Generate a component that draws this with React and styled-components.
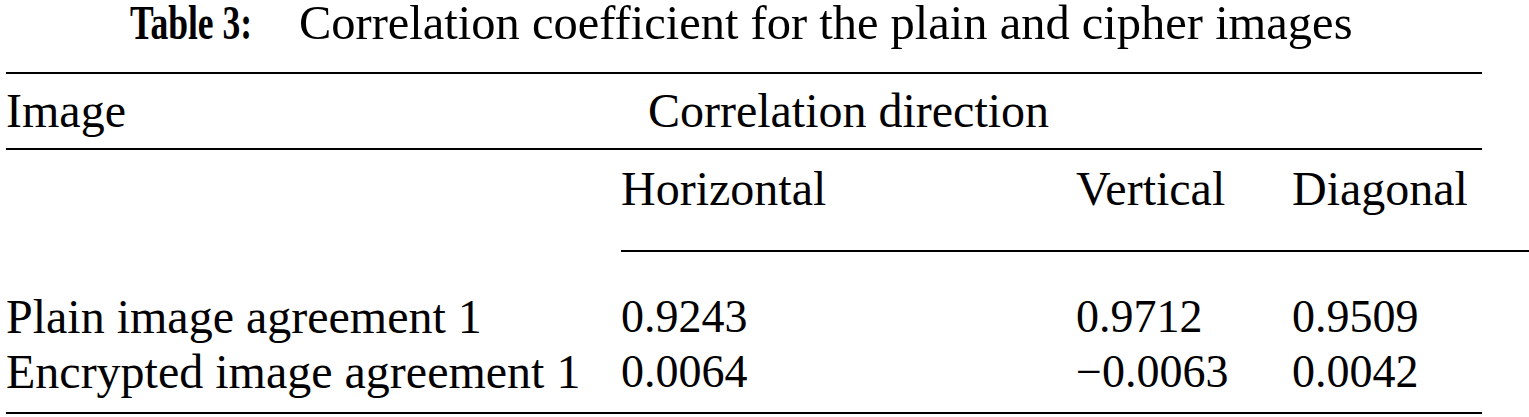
import React from "react";
import styled, { createGlobalStyle } from "styled-components";

const GlobalStyle = createGlobalStyle`
  html, body {
    margin: 0;
    padding: 0;
    background: #ffffff;
    overflow: hidden;
  }
`;

const serif = `"Liberation Serif", "Tinos", "Times New Roman", "DejaVu Serif", serif`;

const Page = styled.div`
  width: 1476px;
  padding-left: 6px;
  font-family: ${serif};
  color: #000000;
`;

const Caption = styled.div`
  height: 70px;
  padding-top: 2px;
  padding-left: 124px;
  font-size: 48.5px;
  line-height: 42px;
  white-space: nowrap;
`;

const CaptionLabel = styled.span`
  display: inline-block;
  margin-right: 4px;
  font-size: 48px;
  font-weight: 700;
  transform: scaleX(0.74);
  transform-origin: left center;
`;

const Table = styled.div`
  border-top: 2px solid #000;
  border-bottom: 2px solid #000;
  font-size: 48px;
  line-height: 44px;
`;

const Row = styled.div`
  display: grid;
  grid-template-columns: 615px 455px 216px 1fr;
  white-space: nowrap;
  padding-top: ${(p) => p.$top || 0}px;
  padding-bottom: ${(p) => p.$bottom || 0}px;
  border-bottom: ${(p) => (p.$rule ? "2px solid #000" : "none")};
`;

const Cell = styled.div`
  text-align: ${(p) => (p.$center ? "center" : "left")};
  font-size: ${(p) => (p.$num ? "46px" : "inherit")};
`;

const MidRule = styled.div`
  grid-column: 2 / -1;
  margin-top: 39px;
  margin-right: -47px;
  border-top: 2px solid #000;
`;

const Body = styled.div`
  display: flex;
  flex-direction: column;
  gap: 11px;
  padding-top: 43px;
  padding-bottom: 18px;
`;

const rows = [
  ["Plain image agreement 1", "0.9243", "0.9712", "0.9509"],
  ["Encrypted image agreement 1", "0.0064", "\u22120.0063", "0.0042"],
];

export default function App() {
  return (
    <>
      <GlobalStyle />
      <Page>
        <Caption>
          <CaptionLabel>Table 3:</CaptionLabel>
          Correlation coefficient for the plain and cipher images
        </Caption>
        <Table>
          <Row $top={15} $bottom={15} $rule>
            <Cell>Image</Cell>
            <Cell $center>Correlation direction</Cell>
            <Cell />
            <Cell />
          </Row>
          <Row $top={17}>
            <Cell />
            <Cell>Horizontal</Cell>
            <Cell>Vertical</Cell>
            <Cell>Diagonal</Cell>
            <MidRule />
          </Row>
          <Body>
            {rows.map((r) => (
              <Row key={r[0]}>
                {r.map((v, i) => (
                  <Cell key={i} $num={i > 0}>
                    {v}
                  </Cell>
                ))}
              </Row>
            ))}
          </Body>
        </Table>
      </Page>
    </>
  );
}
